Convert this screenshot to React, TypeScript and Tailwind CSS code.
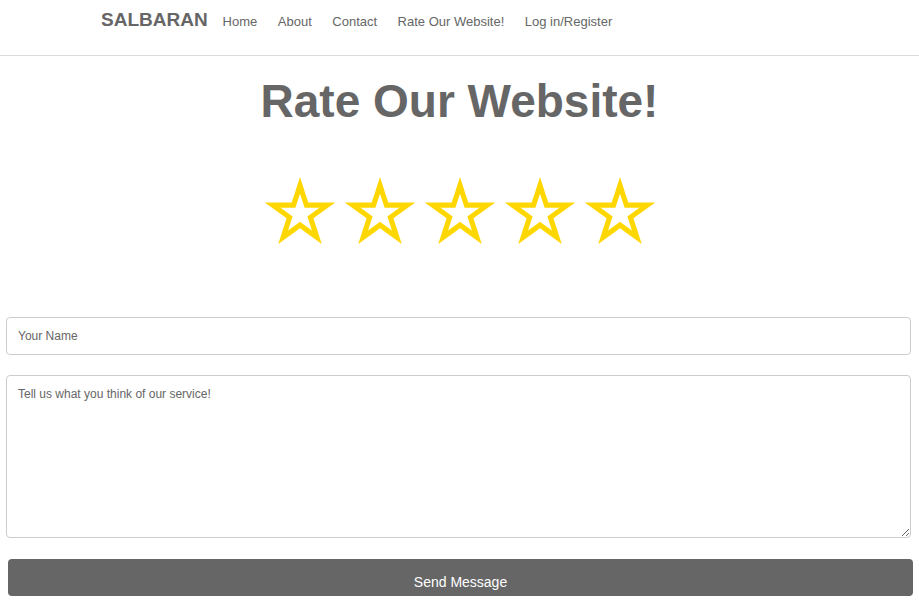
const STAR_OUTER = 37;
const STAR_INNER = STAR_OUTER * 0.382;
const HOLE = 0.55;

const starPoints = (cx: number, cy: number, scale: number) => {
  const pts: string[] = [];
  for (let i = 0; i < 10; i++) {
    const r = (i % 2 === 0 ? STAR_OUTER : STAR_INNER) * scale;
    const a = (Math.PI / 5) * i - Math.PI / 2;
    pts.push(`${(cx + r * Math.cos(a)).toFixed(2)},${(cy + r * Math.sin(a)).toFixed(2)}`);
  }
  return "M" + pts.join("L") + "Z";
};

const Star = () => (
  <svg width="80" height="74" viewBox="0 0 80 74">
    <path
      d={starPoints(40, 38, 1) + starPoints(40, 38, HOLE)}
      fill="#ffd700"
      fillRule="evenodd"
    />
  </svg>
);

const links = ["Home", "About", "Contact", "Rate Our Website!", "Log in/Register"];

const App = () => {
  return (
    <div className="min-h-[611px] bg-white font-['Liberation_Sans',Arial,sans-serif] text-[#666]">
      <div className="h-[56px] border-b border-[#dcdcdc]">
        <div className="flex items-start pl-[101px]">
          <span className="mt-[9px] text-[19px] leading-[22px] font-bold">SALBARAN</span>
          <div className="ml-[15px] mt-[14px] flex gap-[20.5px] text-[13px] leading-[15px]">
            {links.map((item) => (
              <a key={item} href="#" className="text-[#666]">
                {item}
              </a>
            ))}
          </div>
        </div>
      </div>

      <h1 className="mt-[19px] text-center text-[46px] leading-[53px] font-bold">
        Rate Our Website!
      </h1>

      <div className="mt-[48px] flex justify-center">
        {[1, 2, 3, 4, 5].map((n) => (
          <Star key={n} />
        ))}
      </div>

      <form className="mt-[67px] flex flex-col">
        <input
          type="text"
          placeholder="Your Name"
          className="ml-[6px] h-[38px] w-[905px] rounded-[4px] border border-[#cccccc] px-[11px] text-[12px] text-[#444] placeholder:text-[#666] outline-none"
        />
        <textarea
          placeholder="Tell us what you think of our service!"
          className="mt-[20px] ml-[6px] h-[163px] w-[905px] rounded-[4px] border border-[#cccccc] px-[11px] pt-[11px] text-[12px] leading-[14px] text-[#444] placeholder:text-[#666] outline-none"
        />
        <button
          type="button"
          className="mt-[21px] ml-[8px] h-[37px] w-[905px] rounded-[4px] bg-[#666666] pt-[8px] text-[14px] leading-[16px] text-white"
        >
          Send Message
        </button>
      </form>
    </div>
  );
};

export default App;
